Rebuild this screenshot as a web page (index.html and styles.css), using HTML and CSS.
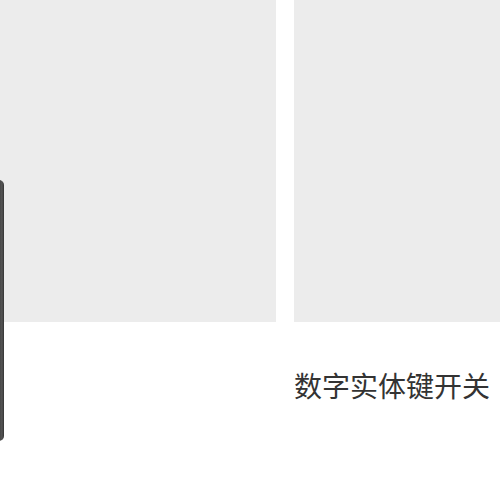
FILE: index.html
```html
<!DOCTYPE html>
<html lang="zh">
<head>
<meta charset="utf-8">
<link rel="stylesheet" href="styles.css">
</head>
<body>
<div class="page">
  <div class="panels">
    <div class="panel panel-left"></div>
    <div class="panel panel-right"></div>
  </div>
  <div class="caption-row">
    <div class="caption">数字实体键开关</div>
  </div>
  <div class="device-edge"></div>
</div>
</body>
</html>
```
FILE: styles.css
```css
html, body {
  margin: 0;
  padding: 0;
  background: #ffffff;
}
.page {
  position: relative;
  width: 500px;
  height: 500px;
  overflow: hidden;
}
.panels {
  display: flex;
  gap: 18px;
  height: 322px;
}
.panel {
  background: #ececec;
  height: 100%;
}
.panel-left {
  width: 276px;
  flex: none;
}
.panel-right {
  flex: 1;
}
.caption-row {
  padding-left: 294px;
  padding-top: 44px;
}
.caption {
  font-family: "Noto Sans CJK SC", "Noto Sans", sans-serif;
  font-size: 28px;
  line-height: 38px;
  color: #333333;
  white-space: nowrap;
}
.device-edge {
  position: absolute;
  left: -10px;
  top: 180px;
  width: 14px;
  height: 261px;
  border-radius: 0 5px 5px 0;
  background: linear-gradient(to right, #2a2a2a 0%, #3a3a3a 60%, #555555 85%, #333333 100%);
  filter: blur(0.6px);
}
```
